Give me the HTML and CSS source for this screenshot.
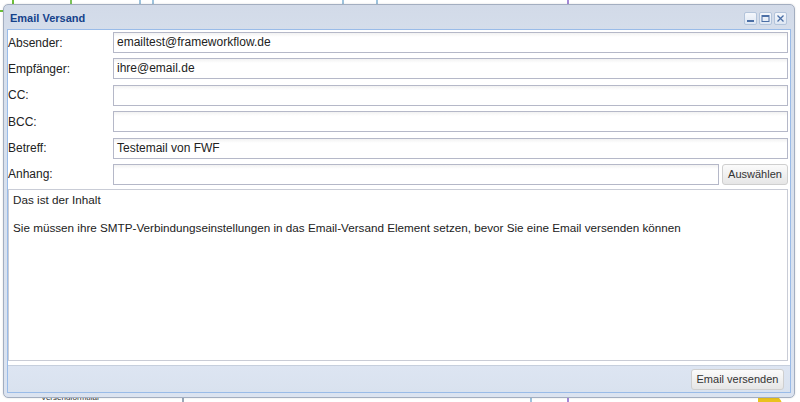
FILE: index.html
```html
<!DOCTYPE html>
<html lang="de">
<head>
<meta charset="utf-8">
<title>Email Versand</title>
<link rel="stylesheet" href="styles.css">
</head>
<body>
<div class="desk">
  <!-- diagram behind the dialog -->
  <div class="node-corner"></div>
  <div class="wire wire-green" style="left:70px"></div>
  <div class="wire wire-blue" style="left:139px"></div>
  <div class="wire wire-blue" style="left:152px"></div>
  <div class="wire wire-blue" style="left:342px"></div>
  <div class="wire wire-blue" style="left:376px"></div>
  <div class="wire wire-purple" style="left:567px"></div>
  <div class="wire-b wire-gray" style="left:182px"></div>
  <div class="wire-b wire-blue" style="left:530px"></div>
  <div class="wire-b wire-purple" style="left:567px"></div>
  <div class="node-yellow"></div>
  <div class="node-label">Versendformular</div>

  <div class="window">
    <div class="win-head">
      <span class="win-title">Email Versand</span>
      <div class="win-tools">
        <span class="tool">
          <svg width="11" height="11" viewBox="0 0 11 11"><rect x="2" y="7" width="7" height="2" fill="#4b6fa6"/></svg>
        </span>
        <span class="tool">
          <svg width="11" height="11" viewBox="0 0 11 11"><rect x="2" y="2.5" width="7" height="6" fill="none" stroke="#4b6fa6" stroke-width="1"/><rect x="2" y="2" width="7" height="2" fill="#4b6fa6"/></svg>
        </span>
        <span class="tool">
          <svg width="11" height="11" viewBox="0 0 11 11"><path d="M2.5 2.5 L8.5 8.5 M8.5 2.5 L2.5 8.5" stroke="#4b6fa6" stroke-width="1.3" fill="none"/></svg>
        </span>
      </div>
    </div>
    <div class="win-body">
      <div class="form">
        <div class="row"><label class="lbl">Absender:</label><div class="field">emailtest@frameworkflow.de</div></div>
        <div class="row"><label class="lbl">Empfänger:</label><div class="field">ihre@email.de</div></div>
        <div class="row"><label class="lbl">CC:</label><div class="field"></div></div>
        <div class="row"><label class="lbl">BCC:</label><div class="field"></div></div>
        <div class="row"><label class="lbl">Betreff:</label><div class="field">Testemail von FWF</div></div>
        <div class="row"><label class="lbl">Anhang:</label><div class="field"></div><button class="btn btn-pick">Auswählen</button></div>
        <div class="editor">
          <p>Das ist der Inhalt</p>
          <p>&nbsp;</p>
          <p>Sie müssen ihre SMTP-Verbindungseinstellungen in das Email-Versand Element setzen, bevor Sie eine Email versenden können</p>
        </div>
      </div>
      <div class="footer">
        <button class="btn btn-send">Email versenden</button>
      </div>
    </div>
  </div>
</div>
</body>
</html>
```

FILE: styles.css
```css
html, body {
  margin: 0;
  padding: 0;
  background: #ffffff;
}

body {
  font-family: "Liberation Sans", Arial, sans-serif;
  font-size: 12px;
  color: #222;
}

.desk {
  position: relative;
  width: 800px;
  height: 402px;
  overflow: hidden;
}

/* diagram pieces on the canvas */
.node-corner {
  position: absolute;
  left: -8px;
  top: -10px;
  width: 18px;
  height: 18px;
  border: 2px solid #6cbf3c;
  border-radius: 6px;
}

.wire {
  position: absolute;
  top: 0;
  width: 2px;
  height: 6px;
}

.wire-b {
  position: absolute;
  top: 396px;
  width: 2px;
  height: 6px;
}

.wire-green { background: #7cc45a; }
.wire-blue { background: #9ec3dd; }
.wire-purple { background: #a58ad8; }
.wire-gray { background: #9aa8b8; }

.node-yellow {
  position: absolute;
  left: 758px;
  top: 395px;
  width: 24px;
  height: 14px;
  background: #e9c21e;
  border-radius: 4px 10px 0 0;
}

.node-label {
  position: absolute;
  left: 41px;
  top: 394px;
  font-size: 8px;
  line-height: 8px;
  color: #333;
}

/* dialog window */
.window {
  position: absolute;
  left: 3px;
  top: 4px;
  width: 784px;
  height: 388px;
  border: 1px solid #a3aec0;
  border-radius: 5px;
  background: linear-gradient(#d2dae8, #d6dfec 40px, #dbe3f0);
  padding: 0 3px 4px 3px;
  display: flex;
  flex-direction: column;
  box-shadow: 0 0 2px rgba(0, 0, 0, 0.15);
}

.win-head {
  height: 24px;
  display: flex;
  align-items: center;
  justify-content: space-between;
  padding: 0 4px 0 3px;
  flex: none;
}

.win-title {
  font-weight: bold;
  font-size: 11px;
  color: #15428b;
  margin-top: 1px;
}

.win-tools {
  display: flex;
  gap: 2px;
  margin-top: 2px;
}

.tool {
  width: 13px;
  height: 13px;
  box-sizing: border-box;
  border: 1px solid #b3c4db;
  border-radius: 2px;
  background: linear-gradient(#f4f7fc, #dfe7f3);
  display: flex;
  align-items: center;
  justify-content: center;
}

.tool svg {
  display: block;
}

.win-body {
  flex: 1;
  border: 1px solid #99bbe8;
  background: #ffffff;
  display: flex;
  flex-direction: column;
  min-height: 0;
}

.form {
  flex: 1;
  padding: 2px 2px 4px 0;
  display: flex;
  flex-direction: column;
  min-height: 0;
}

.row {
  display: flex;
  align-items: center;
  height: 21px;
  margin-bottom: 5.4px;
}

.lbl {
  width: 105px;
  flex: none;
  color: #222;
}

.field {
  flex: 1;
  height: 21px;
  box-sizing: border-box;
  border: 1px solid #b5b8c8;
  background: linear-gradient(#f2f2f2, #ffffff 4px);
  padding: 0 3px;
  line-height: 19px;
  color: #222;
}

.btn {
  font-family: "Liberation Sans", Arial, sans-serif;
  font-size: 11px;
  color: #333;
  height: 21px;
  box-sizing: border-box;
  border: 1px solid #cfcfcf;
  border-radius: 3px;
  background: linear-gradient(#fbfbfb, #e6e6e6);
  padding: 0 4px;
  margin: 0;
  white-space: nowrap;
}

.btn-pick {
  width: 66px;
  margin-left: 3px;
}

.btn-send {
  width: 93px;
}

.editor {
  flex: 1;
  border: 1px solid #c9ccd6;
  margin-top: -1px;
  padding: 3px 4px;
  font-size: 11.7px;
  line-height: 14px;
  color: #222;
}

.editor p {
  margin: 0;
}

.footer {
  flex: none;
  height: 26px;
  border-top: 1px solid #c6cfdd;
  background: linear-gradient(#dde5f2, #d9e2ef);
  display: flex;
  align-items: center;
  justify-content: flex-end;
  padding-right: 6px;
}
```
